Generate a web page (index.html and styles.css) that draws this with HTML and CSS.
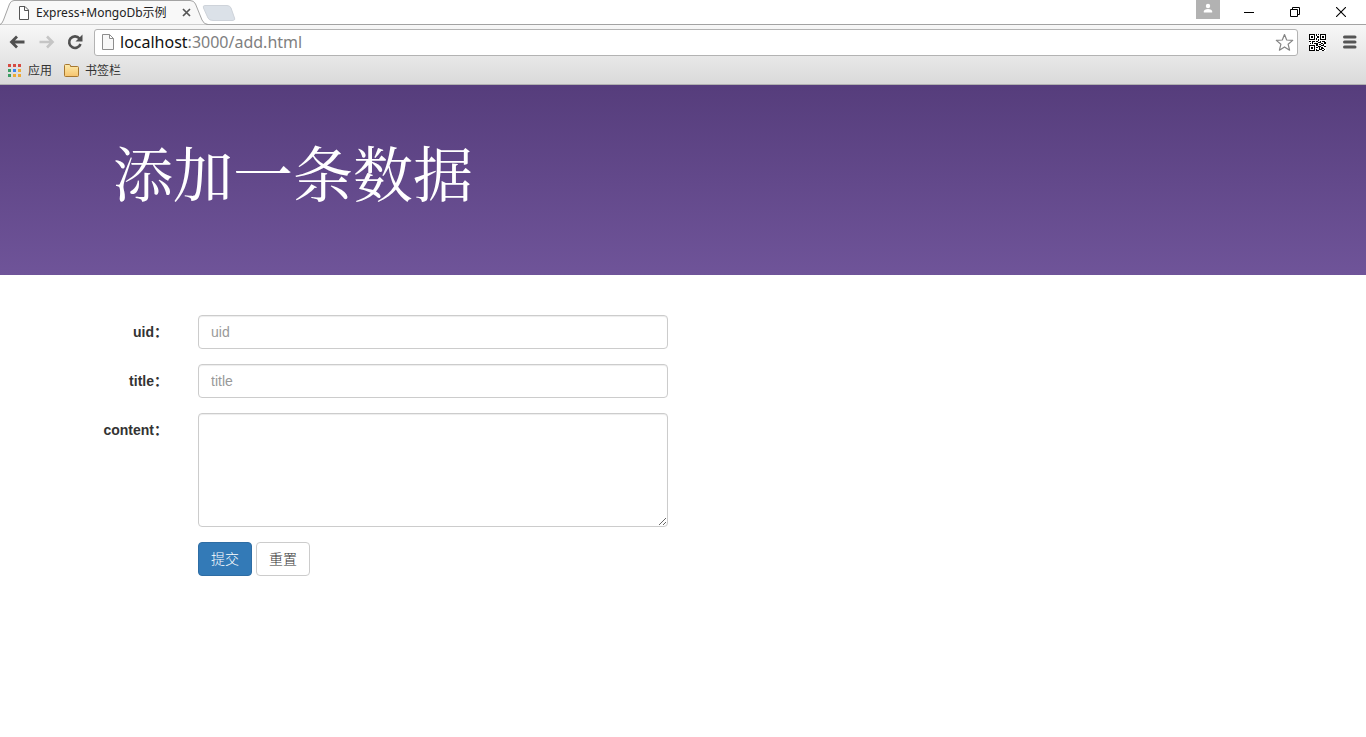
FILE: index.html
```html
<!DOCTYPE html>
<html lang="zh-CN">
<head>
<meta charset="utf-8">
<title>Express+MongoDb示例</title>
<link rel="stylesheet" href="styles.css">
</head>
<body>
<header class="browser">
  <div class="tabstrip">
    <svg class="tab-shapes" width="240" height="25" viewBox="0 0 240 25" aria-hidden="true">
      <path d="M0 24.500Q2 24 3.500 20L9.500 4Q11 .5 14 .5H190Q194 .5 195.500 4L202 20Q204 24.500 208 24.500" fill="#f8f8f8" stroke="#a3a3a3"/>
      <path d="M205 5.500H227Q230 5.500 231 8L234.500 18Q235.500 20.500 232 20.500H213Q209 20.500 208 18L203.500 8Q202.500 5.500 205 5.500Z" fill="#dbe1e8" stroke="#ced3da"/>
    </svg>
    <div class="tab">
      <svg class="tab-page" width="12" height="14" viewBox="0 0 12 14" aria-hidden="true"><path d="M1.500.5H7L10.500 4V13.500H1.500ZM6.500.5V4.500H10.500" fill="#fff" stroke="#555"/></svg>
      <span class="tab-title">Express+MongoDb示例</span>
      <button class="icon-button tab-close" type="button" aria-label="关闭标签页"><svg width="9" height="9" viewBox="0 0 9 9"><path d="M1 1L8 8M8 1L1 8" stroke="#555" stroke-width="1.700"/></svg></button>
    </div>
    <div class="window-controls">
      <button class="icon-button user" type="button" aria-label="用户"><svg width="24" height="19" viewBox="0 0 24 19"><path d="M0 0H24V19H0Z" fill="#b2b2b2"/><circle cx="12" cy="6" r="2.200" fill="#fff"/><path d="M7.800 12.500V11.500Q8 9 12 9T16.200 11.500V12.500Z" fill="#fff"/></svg></button>
      <button class="icon-button window-button" type="button" aria-label="最小化"><svg width="10" height="10" viewBox="0 0 10 10"><path d="M0 5.500H10" stroke="#000"/></svg></button>
      <button class="icon-button window-button" type="button" aria-label="还原"><svg width="10" height="10" viewBox="0 0 10 10"><path d="M.5 2.500H7.500V9.500H.5ZM2.500 2.500V.5H9.500V7.500H7.500" fill="none" stroke="#000"/></svg></button>
      <button class="icon-button window-button" type="button" aria-label="关闭"><svg width="10" height="10" viewBox="0 0 10 10"><path d="M0 0L10 10M10 0L0 10" stroke="#000" stroke-width="1.100"/></svg></button>
    </div>
  </div>
  <div class="toolbar">
    <nav class="history">
      <button class="icon-button" type="button" aria-label="后退"><svg width="17" height="14" viewBox="0 0 17 14"><path d="M15.500 7H3M8 1.500L2.500 7L8 12.500" fill="none" stroke="#505050" stroke-width="2.800"/></svg></button>
      <button class="icon-button" type="button" aria-label="前进" disabled><svg width="17" height="14" viewBox="0 0 17 14"><path d="M1.500 7H14M9 1.500L14.500 7L9 12.500" fill="none" stroke="#c5c5c5" stroke-width="2.600"/></svg></button>
      <button class="icon-button" type="button" aria-label="刷新"><svg width="16" height="16" viewBox="0 0 16 16"><path d="M12.500 4.500A5.800 5.800 0 1 0 13.500 10" fill="none" stroke="#505050" stroke-width="2.600"/><path d="M15.500.5V7.500H8.500Z" fill="#505050"/></svg></button>
    </nav>
    <div class="address">
      <svg width="14" height="16" viewBox="0 0 14 16" aria-hidden="true"><path d="M1.500.5H8.500L12.500 4.500V15.500H1.500ZM8.500.5V4.500H12.500" fill="#f8f8f8" stroke="#8d8d8d"/></svg>
      <div class="url" role="textbox" aria-label="地址栏"><span class="host">localhost</span>:3000/add.html</div>
      <button class="icon-button" type="button" aria-label="加入书签"><svg width="19" height="19" viewBox="0 0 19 19"><path d="M9.500 1.500L11.700 7L17.700 7.400L13.100 11.200L14.600 17.200L9.500 13.900L4.400 17.200L5.900 11.200L1.300 7.400L7.300 7Z" fill="#fff" stroke="#858585" stroke-width="1.200" stroke-linejoin="round"/></svg></button>
    </div>
    <button class="icon-button" type="button" aria-label="二维码"><svg width="17" height="17" viewBox="0 0 17 17" shape-rendering="crispEdges"><path d="M0 0H17V17H0Z" fill="#fff"/><path d="M.5.5H5.500V5.500H.5ZM11.500.5H16.500V5.500H11.500ZM.5 11.500H5.500V16.500H.5Z" fill="none" stroke="#000"/><path d="M2 2h2v2h-2ZM13 2h2v2h-2ZM2 13h2v2h-2ZM7 0h1v2h-1ZM9 0h1v1h-1ZM8 2h2v2h-2ZM7 4h1v2h-1ZM9 5h1v2h-1ZM0 7h2v1h-2ZM3 7h3v1h-3ZM7 7h2v1h-2ZM11 7h1v2h-1ZM13 7h3v1h-3ZM1 9h1v1h-1ZM3 8h1v2h-1ZM5 9h4v1h-4ZM9 8h2v1h-2ZM12 9h2v1h-2ZM15 8h2v2h-2ZM7 10h2v2h-2ZM10 10h2v1h-2ZM14 10h1v2h-1ZM9 12h3v1h-3ZM12 11h2v1h-2ZM7 13h2v1h-2ZM10 13h1v3h-1ZM12 13h2v2h-2ZM15 12h2v1h-2ZM7 15h1v2h-1ZM8 16h2v1h-2ZM11 15h2v1h-2ZM14 14h1v1h-1ZM13 16h2v1h-2ZM15 15h1v1h-1Z"/></svg></button>
    <button class="icon-button menu" type="button" aria-label="菜单"><svg width="14" height="14" viewBox="0 0 14 14"><path d="M1.500 2H12M1.500 7H12M1.500 12H12" stroke="#555" stroke-width="3" stroke-linecap="round"/></svg></button>
  </div>
  <nav class="bookmarks">
    <a class="bookmark" href="#apps"><svg width="14" height="14" viewBox="0 0 14 14" shape-rendering="crispEdges"><path d="M0 0h3v3h-3ZM5 0h3v3h-3ZM10 0h3v3h-3Z" fill="#d64b42"/><path d="M0 5h3v3h-3ZM0 10h3v3h-3Z" fill="#3c9d63"/><path d="M5 5h3v3h-3Z" fill="#3c83ef"/><path d="M10 5h3v3h-3ZM5 10h3v3h-3ZM10 10h3v3h-3Z" fill="#edaa36"/></svg>应用</a>
    <a class="bookmark" href="#bookmarks"><svg width="15" height="13" viewBox="0 0 15 13"><defs><linearGradient id="folder" x2="0" y2="1"><stop stop-color="#fdebac"/><stop offset="1" stop-color="#f5c36d"/></linearGradient></defs><path d="M.5 11.500V1.500Q.5.5 1.500.5H5.500Q6.500.5 6.500 2.500H13.500Q14.500 2.500 14.500 3.500V11.500Q14.500 12.500 13.500 12.500H1.500Q.5 12.500.5 11.500Z" fill="url(#folder)" stroke="#a7772f"/></svg>书签栏</a>
  </nav>
</header>
<main>
  <section class="hero"><div class="container"><h1>添加一条数据</h1></div></section>
  <div class="container">
    <form class="form">
      <div class="row">
        <label for="uid">uid：</label>
        <input class="control" id="uid" name="uid" type="text" placeholder="uid">
      </div>
      <div class="row">
        <label for="title">title：</label>
        <input class="control" id="title" name="title" type="text" placeholder="title">
      </div>
      <div class="row">
        <label for="content">content：</label>
        <textarea class="control" id="content" name="content" rows="5"></textarea>
      </div>
      <div class="row">
        <div class="actions">
          <button class="button primary" type="submit">提交</button>
          <button class="button" type="reset">重置</button>
        </div>
      </div>
    </form>
  </div>
</main>
</body>
</html>
```

FILE: styles.css
```css
* {
  box-sizing: border-box;
}

body {
  margin: 0;
  background: #fff;
  color: #333;
  font: 14px/20px "Liberation Sans", "Noto Sans CJK SC", sans-serif;
}

svg {
  display: block;
  flex: none;
}

.icon-button {
  display: flex;
  align-items: center;
  justify-content: center;
  padding: 0;
  border: 0;
  background: none;
}

.browser {
  border-bottom: 1px solid #b0b0b0;
  background: linear-gradient(#f8f8f8 24px, #dadada);
  font-family: "Noto Sans", "Noto Sans CJK SC", sans-serif;
}

.tabstrip {
  position: relative;
  display: flex;
  justify-content: space-between;
  height: 25px;
  border-bottom: 1px solid #a3a3a3;
  background: #fff;
}

.tab-shapes {
  position: absolute;
  top: 0;
  left: 0;
}

.tab {
  position: relative;
  display: flex;
  align-items: center;
  width: 208px;
  padding: 1px 0 0 18px;
  color: #222;
  font-size: 12px;
}

.tab-title {
  width: 146px;
  padding-left: 6px;
  white-space: nowrap;
}

.tab-close {
  margin-left: 6px;
}

.window-controls {
  display: flex;
  align-items: center;
  padding-right: 2px;
}

.user {
  align-self: flex-start;
  margin-right: 6px;
}

.window-button {
  width: 46px;
  height: 24px;
}

.toolbar {
  display: flex;
  align-items: center;
  gap: 11px;
  height: 34px;
  padding: 0 9px;
}

.history {
  display: flex;
  align-items: center;
  gap: 12px;
}

.address {
  display: flex;
  flex: 1;
  align-items: center;
  height: 27px;
  padding: 0 3px 0 6px;
  border: 1px solid #b3b3b3;
  border-radius: 3px;
  background: #fff;
}

.url {
  flex: 1;
  padding-left: 5px;
  color: #808080;
  font-size: 16px;
}

.host {
  color: #111;
}

.menu {
  margin-left: 6px;
}

.bookmarks {
  display: flex;
  gap: 12px;
  height: 25px;
  padding: 0 8px 2px;
}

.bookmark {
  display: flex;
  align-items: center;
  gap: 6px;
  color: #333;
  font-size: 12px;
  text-decoration: none;
}

.container {
  max-width: 1170px;
  margin: 0 auto;
  padding: 0 15px;
}

.hero {
  padding: 53px 0 71px;
  background: linear-gradient(#563d7c, #6f5499);
  color: #fff;
}

.hero h1 {
  margin: 0;
  font: 400 60px/66px "Noto Serif CJK SC", "Noto Sans CJK SC", serif;
}

.form {
  display: grid;
  gap: 15px;
  margin: 40px -30px;
}

.row {
  display: grid;
  grid-template-columns: repeat(12, 1fr);
}

.row label {
  padding: 7px 15px 0 0;
  font-weight: 700;
  text-align: right;
}

.control {
  grid-column: 2 / span 5;
  height: 34px;
  margin: 0 15px;
  padding: 6px 12px;
  border: 1px solid #ccc;
  border-radius: 4px;
  background: #fff;
  box-shadow: inset 0 1px 1px rgba(0, 0, 0, .075);
  color: #555;
  font: inherit;
}

textarea.control {
  height: auto;
  resize: vertical;
}

.control::placeholder {
  color: #999;
}

.actions {
  display: flex;
  grid-column: 2 / span 11;
  gap: 4px;
  padding: 0 15px;
}

.button {
  padding: 6px 12px;
  border: 1px solid #ccc;
  border-radius: 4px;
  background: #fff;
  color: #333;
  font: inherit;
  font-weight: 300;
}

.button.primary {
  border-color: #2e6da4;
  background: #337ab7;
  color: #fff;
}
```
